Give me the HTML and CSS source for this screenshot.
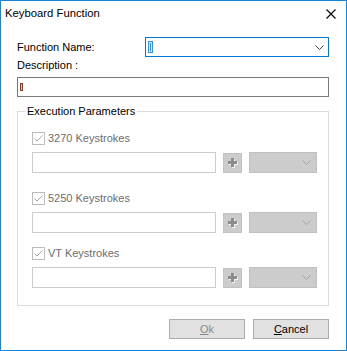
FILE: index.html
```html
<!DOCTYPE html>
<html lang="en">
<head>
    <meta charset="UTF-8">
    <title>Keyboard Function</title>
    <link rel="stylesheet" href="styles.css">
</head>
<body>
    <div class="window">
        <div class="titlebar">
            <span class="title">Keyboard Function</span>
            <svg class="close-icon" width="10" height="10" viewBox="0 0 10 10">
                <path d="M0.5 0.5L9.5 9.5M9.5 0.5L0.5 9.5" stroke="#000" stroke-width="1.1" fill="none"/>
            </svg>
        </div>
        <div class="content">
            <div class="name-row">
                <label class="field-label name-label">Function Name:</label>
                <div class="combo combo-focused">
                    <span class="selection"><span class="selection-glyph"></span></span>
                    <svg class="chevron" width="9" height="5" viewBox="0 0 9 5">
                        <path d="M0.5 0.5L4.5 4.5L8.5 0.5" stroke="#404040" fill="none"/>
                    </svg>
                </div>
            </div>
            <label class="field-label desc-label">Description :</label>
            <div class="textbox"><span class="tofu"></span></div>

            <fieldset class="group">
                <legend>Execution Parameters</legend>

                <div class="check-row">
                    <span class="checkbox"><svg width="11" height="11" viewBox="0 0 11 11"><path d="M1.5 5.5L4 8L9.5 2.5" stroke="#a6a6a6" stroke-width="1" fill="none"/></svg></span>
                    <span>3270 Keystrokes</span>
                </div>
                <div class="input-row">
                    <div class="key-input"></div>
                    <div class="plus-btn"><svg width="11" height="11" viewBox="0 0 11 11"><path d="M4 1h3v3h3v3H7v3H4V7H1V4h3z" fill="#f4f4f4" transform="translate(1 1)"/><path d="M4 1h3v3h3v3H7v3H4V7H1V4h3z" fill="#8c8c8c"/></svg></div>
                    <div class="combo combo-disabled">
                        <svg class="chevron" width="9" height="5" viewBox="0 0 9 5"><path d="M0.5 0.5L4.5 4.5L8.5 0.5" stroke="#a3a3a3" fill="none"/></svg>
                    </div>
                </div>

                <div class="check-row row-second">
                    <span class="checkbox"><svg width="11" height="11" viewBox="0 0 11 11"><path d="M1.5 5.5L4 8L9.5 2.5" stroke="#a6a6a6" stroke-width="1" fill="none"/></svg></span>
                    <span>5250 Keystrokes</span>
                </div>
                <div class="input-row">
                    <div class="key-input"></div>
                    <div class="plus-btn"><svg width="11" height="11" viewBox="0 0 11 11"><path d="M4 1h3v3h3v3H7v3H4V7H1V4h3z" fill="#f4f4f4" transform="translate(1 1)"/><path d="M4 1h3v3h3v3H7v3H4V7H1V4h3z" fill="#8c8c8c"/></svg></div>
                    <div class="combo combo-disabled">
                        <svg class="chevron" width="9" height="5" viewBox="0 0 9 5"><path d="M0.5 0.5L4.5 4.5L8.5 0.5" stroke="#a3a3a3" fill="none"/></svg>
                    </div>
                </div>

                <div class="check-row row-third">
                    <span class="checkbox"><svg width="11" height="11" viewBox="0 0 11 11"><path d="M1.5 5.5L4 8L9.5 2.5" stroke="#a6a6a6" stroke-width="1" fill="none"/></svg></span>
                    <span>VT Keystrokes</span>
                </div>
                <div class="input-row">
                    <div class="key-input"></div>
                    <div class="plus-btn"><svg width="11" height="11" viewBox="0 0 11 11"><path d="M4 1h3v3h3v3H7v3H4V7H1V4h3z" fill="#f4f4f4" transform="translate(1 1)"/><path d="M4 1h3v3h3v3H7v3H4V7H1V4h3z" fill="#8c8c8c"/></svg></div>
                    <div class="combo combo-disabled">
                        <svg class="chevron" width="9" height="5" viewBox="0 0 9 5"><path d="M0.5 0.5L4.5 4.5L8.5 0.5" stroke="#a3a3a3" fill="none"/></svg>
                    </div>
                </div>
            </fieldset>

            <div class="buttons">
                <button class="btn btn-disabled"><u>O</u>k</button>
                <button class="btn"><u>C</u>ancel</button>
            </div>
        </div>
    </div>
</body>
</html>
```

FILE: styles.css
```css
html, body {
    margin: 0;
    padding: 0;
}
body {
    font-family: 'Liberation Sans', Arial, sans-serif;
    font-size: 11px;
    line-height: 16px;
    color: #000;
    background: #fff;
}
.window {
    width: 347px;
    height: 351px;
    box-sizing: border-box;
    border: 1px solid #1883d7;
    background: #fff;
}
.titlebar {
    height: 30px;
    box-sizing: border-box;
    padding: 4px 10px 0 4px;
    display: flex;
    justify-content: space-between;
    align-items: flex-start;
}
.title {
    font-size: 11.3px;
}
.close-icon {
    margin-top: 4px;
}
.content {
    padding: 6px 0 0 16px;
    width: 312px;
}

/* Top fields */
.name-row {
    display: flex;
    align-items: center;
    height: 20px;
}
.name-label {
    width: 128px;
}
.combo {
    box-sizing: border-box;
    display: flex;
    align-items: center;
    justify-content: space-between;
}
.combo-focused {
    width: 184px;
    height: 20px;
    border: 1px solid #0078d7;
    padding: 0 4px 0 2px;
}
.selection {
    width: 5px;
    height: 12px;
    background: #3390e8;
    display: flex;
    align-items: center;
    justify-content: center;
}
.selection-glyph {
    width: 1px;
    height: 8px;
    border: 1px solid #cfe6ff;
}
.desc-label {
    display: block;
}
.textbox {
    margin-top: 4px;
    width: 312px;
    height: 20px;
    box-sizing: border-box;
    border: 1px solid #7a7a7a;
    display: flex;
    align-items: center;
    padding-left: 2px;
}
.tofu {
    width: 1px;
    height: 6px;
    border: 1px solid #8a3a2a;
    background: #f0b0a8;
}

/* Group box */
.group {
    margin: 6px 0 0 0;
    padding: 0 11px 17px 14px;
    width: 312px;
    box-sizing: border-box;
    border: 1px solid #dcdcdc;
    min-width: 0;
}
.group legend {
    padding: 0 2px;
    margin-left: -7px;
    line-height: 16px;
}
.check-row {
    margin-top: 11px;
    height: 16px;
    display: flex;
    align-items: center;
    gap: 3px;
    color: #6d6d6d;
}
.check-row.row-second {
    margin-top: 17px;
}
.check-row.row-third {
    margin-top: 12px;
}
.checkbox {
    width: 13px;
    height: 13px;
    box-sizing: border-box;
    border: 1px solid #bcbcbc;
    background: #fff;
    display: flex;
    align-items: center;
    justify-content: center;
}
.input-row {
    margin-top: 6px;
    display: flex;
    align-items: center;
    gap: 7px;
}
.key-input {
    width: 184px;
    height: 21px;
    box-sizing: border-box;
    border: 1px solid #cccccc;
    background: #fff;
}
.plus-btn {
    width: 19px;
    height: 20px;
    box-sizing: border-box;
    border: 1px solid #c2c2c2;
    background: #cccccc;
    display: flex;
    align-items: center;
    justify-content: center;
}
.combo-disabled {
    width: 68px;
    height: 21px;
    border: 1px solid #bfbfbf;
    background: #cccccc;
    justify-content: flex-end;
    padding-right: 5px;
}

/* Dialog buttons */
.buttons {
    margin-top: 13px;
    display: flex;
    justify-content: flex-end;
    gap: 8px;
}
.btn {
    width: 76px;
    height: 20px;
    padding: 0;
    box-sizing: border-box;
    border: 1px solid #adadad;
    background: #e1e1e1;
    font-family: inherit;
    font-size: 11px;
    line-height: 16px;
    color: #000;
}
.btn-disabled {
    color: #8a8a8a;
}
```
